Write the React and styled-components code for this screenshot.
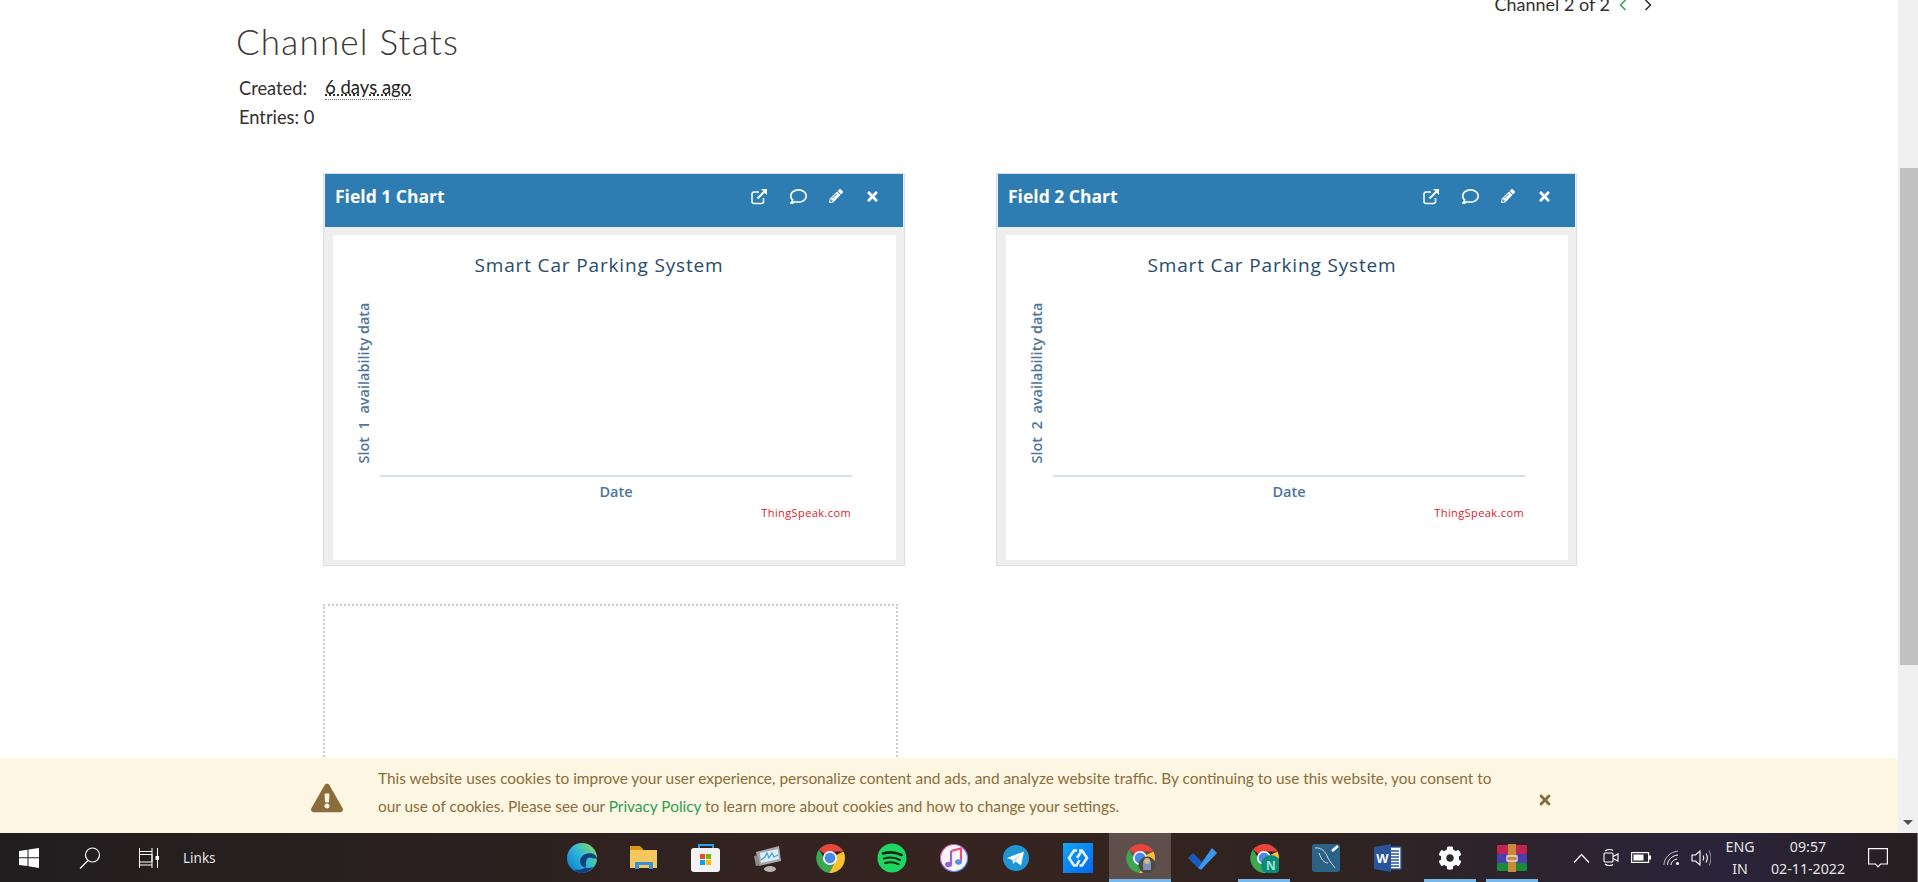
import styled, { createGlobalStyle } from "styled-components";
import { FaCog, FaExclamationTriangle, FaPencilAlt, FaRegComment, FaTimes } from "react-icons/fa";

const GlobalStyle = createGlobalStyle`
  html, body {
    margin: 0;
    padding: 0;
    overflow: hidden;
    background: #fff;
  }
  * { box-sizing: border-box; }
`;

const Chrome = ({ children }) => (
  <svg width="30" height="30" viewBox="0 0 30 30">
    <path d="M15 15 L4 6.5 A15 15 0 0 1 28.5 8.5 L15 8.5 Z" fill="#e8453c" />
    <path d="M15 15 L28.5 8.5 A15 15 0 0 1 14 30 L21 17 Z" fill="#fbc02d" />
    <path d="M14 30 A15 15 0 0 1 4 6.5 L11 18 L15 15 L21 17 Z" fill="#3ca650" />
    <circle cx="15" cy="15" r="7" fill="#fff" />
    <circle cx="15" cy="15" r="5.4" fill="#4a89e8" />
    {children}
  </svg>
);

const appIcons = [
  {
    id: "edge",
    icon: (
      <svg width="30" height="30" viewBox="0 0 30 30">
        <defs>
          <linearGradient id="edgeTop" x1="0" y1="0.9" x2="1" y2="0.1">
            <stop offset="0" stopColor="#0a78d0" />
            <stop offset="0.5" stopColor="#2fb6d8" />
            <stop offset="1" stopColor="#86e05c" />
          </linearGradient>
        </defs>
        <circle cx="15" cy="15" r="15" fill="url(#edgeTop)" />
        <path d="M30 16 C29.5 11.5 25 9.5 20.5 10.5 C15 11.5 12 16 13.5 20.5 C15 25 21 26.5 26.5 23.5 C23 28.5 17 31 11 29.5 C9 28.5 8 27.5 7.5 26.5 C14 27.5 20 25.5 19 21 C18 17.5 21 15.5 25 15.5 C27 15.5 29 15.5 30 16 Z" fill="#12407e" />
        <circle cx="23" cy="18" r="3.5" fill="#35c1c0" />
      </svg>
    ),
  },
  {
    id: "folder",
    icon: (
      <svg width="30" height="30" viewBox="0 0 30 30">
        <path d="M1 3 H11 L14 6 V10 H1 Z" fill="#d79a12" />
        <path d="M1 7 H28 V25 H1 Z" fill="#f3c85f" />
        <path d="M6 26 V19 H24 V26 H20 V22 H10 V26 Z" fill="#3a8fd6" />
      </svg>
    ),
  },
  {
    id: "store",
    icon: (
      <svg width="30" height="30" viewBox="0 0 30 30">
        <path d="M8 6 V2 H22 V6" fill="none" stroke="#2aa3e6" strokeWidth="2" />
        <rect y="5" width="29" height="24" rx="3" fill="#f3f3f3" />
        <rect x="9" y="11" width="5" height="5" fill="#e8502a" />
        <rect x="15" y="11" width="5" height="5" fill="#7ab800" />
        <rect x="9" y="17" width="5" height="5" fill="#00a4ef" />
        <rect x="15" y="17" width="5" height="5" fill="#ffb900" />
      </svg>
    ),
  },
  {
    id: "perf",
    icon: (
      <svg width="30" height="30" viewBox="0 0 30 30">
        <path d="M3 9 L26 3 L28 18 L6 23 Z" fill="#a8a8a8" />
        <path d="M7 10 L25 6 L26 16 L8 20 Z" fill="#dcebf5" />
        <path d="M8 17 L12 14 L14 10 L16 15 L19 10 L21 14 L25 12" fill="none" stroke="#4a9bd0" strokeWidth="1.2" />
        <ellipse cx="17" cy="26" rx="6" ry="3" fill="#b5b5b5" />
        <path d="M1 13 L5 12 L7 22 L3 23 Z" fill="#8d8d8d" />
      </svg>
    ),
  },
  { id: "chrome", icon: <Chrome /> },
  {
    id: "spotify",
    icon: (
      <svg width="30" height="30" viewBox="0 0 30 30">
        <circle cx="15" cy="15" r="14.5" fill="#1ed760" />
        <path d="M6 10.5 C12 8.8 19 9.3 24.5 12" fill="none" stroke="#14261b" strokeWidth="2.6" strokeLinecap="round" />
        <path d="M7 15.5 C12 14 18.5 14.5 23 17" fill="none" stroke="#14261b" strokeWidth="2.2" strokeLinecap="round" />
        <path d="M8 20 C12 19 18 19.3 21.5 21.3" fill="none" stroke="#14261b" strokeWidth="1.9" strokeLinecap="round" />
      </svg>
    ),
  },
  {
    id: "itunes",
    icon: (
      <svg width="30" height="30" viewBox="0 0 30 30">
        <defs>
          <linearGradient id="itunesRing" x1="0" y1="0" x2="1" y2="1">
            <stop offset="0" stopColor="#f25a8f" />
            <stop offset="0.5" stopColor="#a55ee0" />
            <stop offset="1" stopColor="#35b6ee" />
          </linearGradient>
        </defs>
        <circle cx="15" cy="15" r="13.5" fill="#f6f6f6" stroke="url(#itunesRing)" strokeWidth="1.2" />
        <path d="M12 8 L22 5.5 V19" fill="none" stroke="#e8527e" strokeWidth="2.2" />
        <path d="M12 8 V21.5" fill="none" stroke="#9a62d8" strokeWidth="2.2" />
        <ellipse cx="9.5" cy="21.5" rx="3.4" ry="2.8" fill="#8a66dc" />
        <ellipse cx="19.5" cy="19" rx="3.4" ry="2.8" fill="#5d8fe6" />
      </svg>
    ),
  },
  {
    id: "telegram",
    icon: (
      <svg width="30" height="30" viewBox="0 0 30 30">
        <circle cx="15" cy="15" r="13" fill="#1f96d3" />
        <path d="M6 15 L23 8.5 L20 22.5 L14.5 18.5 L12 21 L11.5 17 Z" fill="#fff" />
        <path d="M11.5 17 L20 11 L14.5 18.5 Z" fill="#c5dff0" />
      </svg>
    ),
  },
  {
    id: "link",
    icon: (
      <svg width="30" height="30" viewBox="0 0 30 30">
        <defs>
          <linearGradient id="linkBg" x1="0" y1="0" x2="1" y2="1">
            <stop offset="0" stopColor="#12a6f5" />
            <stop offset="1" stopColor="#0466f0" />
          </linearGradient>
        </defs>
        <rect width="30" height="30" fill="url(#linkBg)" />
        <path d="M14 7.5 H11 L6 15 L11 22.5 H13.5 L16.5 17 M16 7.5 H19 L24 15 L19 22.5 H16.5" fill="none" stroke="#e6f2ff" strokeWidth="2.6" />
        <path d="M18 9 L14 15" stroke="#e6f2ff" strokeWidth="2.6" />
      </svg>
    ),
  },
  {
    id: "active",
    active: true,
    open: true,
    icon: (
      <Chrome>
        <circle cx="22" cy="22" r="8.5" fill="#4c4a48" />
        <rect x="18" y="18" width="8" height="9" fill="#7f8fb5" />
        <circle cx="22" cy="18" r="3" fill="#c9bb8a" />
      </Chrome>
    ),
  },
  {
    id: "todo",
    icon: (
      <svg width="30" height="30" viewBox="0 0 30 30">
        <path d="M1 15 L6 10 L15 19 L11 25 Z" fill="#185abd" />
        <path d="M11 25 L25 5 L30 10 L14 27 Z" fill="#3a97ee" />
      </svg>
    ),
  },
  {
    id: "chromeN",
    open: true,
    icon: (
      <Chrome>
        <circle cx="22" cy="22" r="10" fill="#0b8a7a" />
        <text x="22" y="26.5" fontSize="12" fontWeight="700" fontFamily="'Open Sans', sans-serif" fill="#9fe3d8" textAnchor="middle">N</text>
      </Chrome>
    ),
  },
  {
    id: "mysql",
    icon: (
      <svg width="30" height="30" viewBox="0 0 30 30">
        <rect x="1" y="1" width="28" height="28" rx="3" fill="#2b6286" />
        <path d="M4 5 C10 4 15 9 17 15 C19 19 22 22 24 25 M17 20 C13 20 10 16 8 10" fill="none" stroke="#c9dce8" strokeWidth="1" />
        <path d="M21 8 L27 3" stroke="#fff" strokeWidth="2.6" />
      </svg>
    ),
  },
  {
    id: "word",
    icon: (
      <svg width="30" height="30" viewBox="0 0 30 30">
        <rect x="11" y="4" width="17" height="22" fill="#fff" stroke="#2a5699" strokeWidth="1.4" />
        <path d="M17 8 H26 M17 11 H26 M17 14 H26 M17 17 H26 M17 20 H26 M17 23 H26" stroke="#2a5699" strokeWidth="1.3" />
        <path d="M1 4 L18 1 V29 L1 26 Z" fill="#2a5699" />
        <text x="9.5" y="20" fontSize="13" fontWeight="700" fontFamily="'Liberation Sans', sans-serif" fill="#fff" textAnchor="middle">W</text>
      </svg>
    ),
  },
  { id: "gear", open: true, icon: <FaCog size={24} color="#fff" /> },
  {
    id: "winrar",
    open: true,
    icon: (
      <svg width="30" height="30" viewBox="0 0 30 30">
        <rect y="2" width="30" height="9" rx="1" fill="#c2254f" />
        <rect y="11" width="30" height="9" rx="1" fill="#4b3fb0" />
        <rect y="20" width="30" height="8" rx="1" fill="#1d8a3a" />
        <rect x="11" y="1" width="8" height="28" fill="#c98a3a" />
        <rect x="10" y="13" width="10" height="5" fill="none" stroke="#eee" strokeWidth="1.2" />
      </svg>
    ),
  },
];

const FieldChart = ({ field, slot }) => (
  <Card>
    <CardHeader>
      <CardTitle>Field {field} Chart</CardTitle>
      <CardActions>
        <svg width="17" height="17" viewBox="0 0 17 17" fill="none" stroke="#fff" strokeWidth="1.5">
          <path d="M12.5 10 V14 A2 2 0 0 1 10.5 15.5 H3 A2 2 0 0 1 1 13.5 V6 A2 2 0 0 1 3 4 H8" />
          <path d="M6.5 10.5 L14 3" strokeWidth="2" />
          <path d="M10 1 H16 V7 Z" fill="#fff" stroke="none" />
        </svg>
        <FaRegComment size={17} />
        <FaPencilAlt size={14} />
        <FaTimes size={15} />
      </CardActions>
    </CardHeader>
    <CardBody>
      <ChartSvg width="563" height="325" viewBox="0 0 563 325">
        <ChartTitle x="266" y="37" textAnchor="middle">Smart Car Parking System</ChartTitle>
        <SlotLabel transform="translate(36 148) rotate(-90)" textAnchor="middle">
          {`Slot  ${slot}  availability data`}
        </SlotLabel>
        <line x1="47" y1="241" x2="519" y2="241" stroke="#d8e0ea" strokeWidth="2" />
        <AxisLabel x="283" y="262" textAnchor="middle">Date</AxisLabel>
        <Credit x="518" y="282" textAnchor="end">ThingSpeak.com</Credit>
      </ChartSvg>
    </CardBody>
  </Card>
);

export default function App() {
  return (
    <Screen>
      <GlobalStyle />
      <Window>
        <Page>
          <Content>
            <Pager>
              Channel 2 of 2
              <PagerArrow>
                <svg width="8" height="12" viewBox="0 0 8 12" fill="none" stroke="#2f9e55" strokeWidth="1.5">
                  <path d="M6.5 1 L1.5 6 L6.5 11" />
                </svg>
              </PagerArrow>
              <PagerArrow>
                <svg width="8" height="12" viewBox="0 0 8 12" fill="none" stroke="#1f2d3d" strokeWidth="1.5">
                  <path d="M1.5 1 L6.5 6 L1.5 11" />
                </svg>
              </PagerArrow>
            </Pager>
            <Title>Channel Stats</Title>
            <Meta>
              <MetaRow>
                <MetaLabel>Created:</MetaLabel>
                <Ago>6 days ago</Ago>
              </MetaRow>
              <MetaRow>Entries: 0</MetaRow>
            </Meta>
            <Cards>
              <FieldChart field={1} slot={1} />
              <FieldChart field={2} slot={2} />
              <Placeholder />
            </Cards>
          </Content>
          <CookieBar>
            <CookieIcon>
              <FaExclamationTriangle size={32} />
            </CookieIcon>
            <CookieText>
              This website uses cookies to improve your user experience, personalize content and ads, and analyze website traffic. By continuing to use this website, you consent to our use of cookies. Please see our <CookieLink>Privacy Policy</CookieLink> to learn more about cookies and how to change your settings.
            </CookieText>
            <CookieClose>
              <FaTimes size={16} />
            </CookieClose>
          </CookieBar>
        </Page>
        <Scrollbar>
          <ScrollThumb />
          <ScrollArrow />
        </Scrollbar>
      </Window>
      <Taskbar>
        <TaskLeft>
          <TaskTool>
            <svg width="20" height="20" viewBox="0 0 20 20" fill="#fff">
              <path d="M0 3 L8.5 1.8 V9.3 H0 Z M9.5 1.6 L20 0 V9.3 H9.5 Z M0 10.3 H8.5 V18 L0 17 Z M9.5 10.3 H20 V20 L9.5 18.3 Z" />
            </svg>
          </TaskTool>
          <TaskTool>
            <svg width="22" height="22" viewBox="0 0 22 22" fill="none" stroke="#fff" strokeWidth="1.2">
              <circle cx="13.5" cy="8" r="7" />
              <path d="M9 13.5 L1 21.5" />
            </svg>
          </TaskTool>
          <TaskTool $last>
            <svg width="20" height="20" viewBox="0 0 20 20" fill="none" stroke="#fff" strokeWidth="1">
              <path d="M0.5 0 V20 M13 0 V20 M0.5 3.5 H13 M0.5 6.5 H13 V14 H0.5 M0.5 17 H13 M18.5 0 V8 M18.5 12 V20" />
              <rect x="16.5" y="8" width="3.5" height="4" fill="#fff" stroke="none" />
            </svg>
          </TaskTool>
          <LinksLabel>Links</LinksLabel>
        </TaskLeft>
        <TaskApps>
          {appIcons.map((app) => (
            <TaskApp key={app.id} $active={app.active} $open={app.open}>
              {app.icon}
            </TaskApp>
          ))}
        </TaskApps>
        <Tray>
          <TrayIcon>
            <svg width="17" height="10" viewBox="0 0 17 10" fill="none" stroke="#fff" strokeWidth="1.2">
              <path d="M1 9.5 L8.5 1.5 L16 9.5" />
            </svg>
          </TrayIcon>
          <TrayIcon>
            <svg width="16" height="19" viewBox="0 0 16 19" fill="none" stroke="#fff" strokeWidth="1.1">
              <rect x="1" y="5" width="9" height="9" rx="1" />
              <path d="M10 8.5 L15 6 V13 L10 10.5" />
              <path d="M2 3 C4 1 8 1 10 2.5 M2 16 C4 18 8 18 10 16.5" />
            </svg>
          </TrayIcon>
          <TrayIcon>
            <svg width="20" height="11" viewBox="0 0 20 11" fill="none" stroke="#fff" strokeWidth="1.2">
              <rect x="0.6" y="0.6" width="17" height="9.8" />
              <rect x="2.5" y="2.5" width="10" height="6" fill="#fff" stroke="none" />
              <rect x="18" y="3.5" width="2" height="4" fill="#fff" stroke="none" />
            </svg>
          </TrayIcon>
          <TrayIcon>
            <svg width="17" height="16" viewBox="0 0 17 16" fill="none" stroke="#fff" strokeWidth="1">
              <path d="M1 15 C1 8 7 2 15 1" opacity="0.7" />
              <path d="M4.5 15 C4.5 10 9 5.5 15 5" />
              <path d="M8 15 C8 12 11 9.5 14 9" />
              <circle cx="14.5" cy="13.5" r="1.6" fill="#fff" stroke="none" />
            </svg>
          </TrayIcon>
          <TrayIcon>
            <svg width="20" height="18" viewBox="0 0 20 18" fill="none" stroke="#fff" strokeWidth="1.1">
              <path d="M1 6 H4.5 L9 2 V16 L4.5 12 H1 Z" />
              <path d="M12 6.5 C13 8 13 10 12 11.5" />
              <path d="M15 4.5 C16.5 7 16.5 11 15 13.5" />
              <path d="M18 1.5 C20.3 6 20.3 12 18 16.5" opacity="0.45" />
            </svg>
          </TrayIcon>
          <TrayText $width={42}>
            <span>ENG</span>
            <span>IN</span>
          </TrayText>
          <TrayText $width={88}>
            <span>09:57</span>
            <span>02-11-2022</span>
          </TrayText>
          <Notify>
            <svg width="20" height="20" viewBox="0 0 20 20" fill="none" stroke="#fff" strokeWidth="1.2">
              <path d="M0.6 0.6 H19.4 V16 H12.5 L10 18.8 L7.5 16 H0.6 Z" />
            </svg>
          </Notify>
        </Tray>
      </Taskbar>
    </Screen>
  );
}

const Screen = styled.div`
  height: 882px;
  width: 1918px;
  display: flex;
  flex-direction: column;
  overflow: hidden;
`;
const Window = styled.div`
  flex: 1;
  min-height: 0;
  display: flex;
`;
const Page = styled.main`
  flex: 1;
  min-width: 0;
  display: flex;
  flex-direction: column;
`;
const Content = styled.div`
  flex: 1;
  min-height: 0;
  overflow: hidden;
  font-family: Lato, "Liberation Sans", sans-serif;
  color: #33302c;
`;
const Pager = styled.div`
  height: 22px;
  margin-top: -7px;
  padding-right: 238px;
  display: flex;
  justify-content: flex-end;
  align-items: center;
  font-size: 18px;
  line-height: 22px;
`;
const PagerArrow = styled.span`
  width: 25px;
  margin-top: 2px;
  display: flex;
  justify-content: center;
`;
const Title = styled.h1`
  margin: 4px 0 0 236px;
  font-size: 35px;
  line-height: 44px;
  font-weight: 300;
  letter-spacing: 1.2px;
  color: #3a3632;
`;
const Meta = styled.div`
  margin: 11px 0 0 239px;
  font-size: 18.3px;
  line-height: 29px;
`;
const MetaRow = styled.div`
  display: flex;
`;
const MetaLabel = styled.span`
  width: 86px;
`;
const Ago = styled.span`
  height: 26px;
  color: #222;
  font-size: 18.5px;
  text-decoration: underline dotted;
  border-bottom: 1px dotted #777;
  line-height: 27px;
`;
const Cards = styled.div`
  margin: 41px 0 0 323px;
  display: grid;
  grid-template-columns: 582px 581px;
  column-gap: 91px;
  row-gap: 38px;
`;
const Card = styled.section`
  height: 393px;
  border: 1px solid #ddd;
  padding: 0 1px;
  background: #eee;
`;
const CardHeader = styled.header`
  height: 53px;
  padding: 0 0 9px 10px;
  margin: 0 0 8px;
  display: flex;
  align-items: center;
  justify-content: space-between;
  background: #2e7db2;
  color: #fff;
`;
const CardTitle = styled.h2`
  margin: 0;
  font-family: "Open Sans", sans-serif;
  font-size: 17.5px;
  font-weight: 700;
`;
const CardActions = styled.div`
  width: 152px;
  display: flex;
  align-items: center;
  justify-content: space-between;
  padding-right: 23px;
`;
const CardBody = styled.div`
  height: 325px;
  margin: 0 7px 0 8px;
  background: #fff;
`;
const ChartSvg = styled.svg`
  display: block;
  font-family: "Open Sans", sans-serif;
`;
const ChartTitle = styled.text`
  font-size: 19px;
  letter-spacing: 0.85px;
  fill: #274b6d;
`;
const AxisLabel = styled.text`
  font-size: 14.5px;
  font-weight: 600;
  fill: #4d759e;
`;
const SlotLabel = styled(AxisLabel)`
  font-size: 14.5px;
  white-space: pre;
`;
const Credit = styled.text`
  font-size: 11px;
  letter-spacing: 0.4px;
  fill: #e0202a;
`;
const Placeholder = styled.div`
  width: 575px;
  height: 400px;
  border: 2px dotted #ccc;
`;
const CookieBar = styled.aside`
  flex: none;
  height: 75px;
  padding-left: 311px;
  display: flex;
  align-items: center;
  background: #fdf6e3;
  color: #8a6d3b;
  font-family: Lato, "Liberation Sans", sans-serif;
`;
const CookieIcon = styled.div`
  width: 67px;
  margin-top: 5px;
  display: flex;
  color: #8a6d3b;
`;
const CookieText = styled.p`
  width: 1130px;
  margin: 0 0 8px;
  font-size: 15.4px;
  line-height: 28px;
`;
const CookieLink = styled.a`
  color: #2f9e55;
`;
const CookieClose = styled.div`
  margin: 8px 0 0 29px;
  display: flex;
`;
const Scrollbar = styled.div`
  flex: none;
  width: 20px;
  padding: 168px 0 0 2px;
  display: flex;
  flex-direction: column;
  align-items: stretch;
  background: #f0f0f0;
`;
const ScrollThumb = styled.div`
  height: 497px;
  background: #c1c1c1;
`;
const ScrollArrow = styled.div`
  width: 0;
  height: 0;
  margin: 155px 0 0 3px;
  border-left: 5px solid transparent;
  border-right: 5px solid transparent;
  border-top: 5px solid #505050;
`;
const Taskbar = styled.footer`
  flex: none;
  height: 49px;
  display: flex;
  background: linear-gradient(90deg, #211d1f 0%, #2c2120 25%, #362420 50%, #30231f 68%, #29243a 90%, #271f20 100%);
  color: #e4e4e4;
  font-family: "Noto Sans", sans-serif;
`;
const TaskLeft = styled.div`
  width: 551px;
  padding-left: 10px;
  display: flex;
  align-items: center;
`;
const TaskTool = styled.div`
  width: ${(p) => (p.$last ? 38 : 60)}px;
  display: flex;
  padding-left: 9px;
`;
const LinksLabel = styled.span`
  margin-left: 15px;
  font-size: 13.5px;
`;
const TaskApps = styled.div`
  width: 992px;
  display: flex;
`;
const TaskApp = styled.div`
  position: relative;
  width: 62px;
  display: flex;
  align-items: center;
  justify-content: center;
  background: ${(p) => (p.$active ? "#5f4f4a" : "transparent")};
  ${(p) =>
    p.$open &&
    `
    &::after {
      content: "";
      position: absolute;
      left: ${p.$active ? "0" : "5px"};
      right: ${p.$active ? "0" : "5px"};
      bottom: 0;
      height: 3px;
      background: #76b9ed;
    }
  `}
`;
const Tray = styled.div`
  flex: 1;
  padding-left: 23px;
  display: flex;
  align-items: center;
  border-right: 1px solid #7a7a7a;
`;
const TrayIcon = styled.div`
  width: 30px;
  display: flex;
  justify-content: center;
`;
const TrayText = styled.div`
  width: ${(p) => p.$width}px;
  display: flex;
  flex-direction: column;
  align-items: center;
  font-size: 14.2px;
  line-height: 22px;
  margin-left: 3px;
`;
const Notify = styled.div`
  margin-left: 16px;
  display: flex;
`;
